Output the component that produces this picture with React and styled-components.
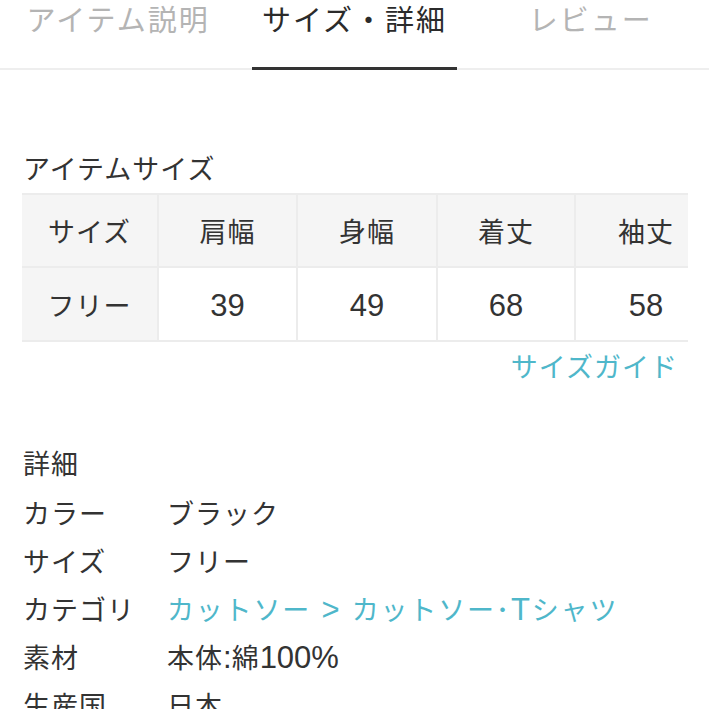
import React from "react";
import styled, { createGlobalStyle } from "styled-components";

const GlobalStyle = createGlobalStyle`
  html, body {
    margin: 0;
    padding: 0;
    background: #fff;
  }
  body {
    font-family: "Noto Sans CJK JP", "Noto Sans", sans-serif;
    color: #333;
  }
`;

const tabs = ["アイテム説明", "サイズ・詳細", "レビュー"];
const columns = [
  { label: "サイズ", value: "フリー", width: 135 },
  { label: "肩幅", value: "39", width: 137 },
  { label: "身幅", value: "49", width: 138 },
  { label: "着丈", value: "68", width: 136 },
  { label: "袖丈", value: "58", width: 140 },
];
const details = [
  { label: "カラー", value: "ブラック" },
  { label: "サイズ", value: "フリー" },
  { label: "カテゴリ", value: "カットソー > カットソー･Tシャツ", link: true },
  { label: "素材", value: "本体:綿100%" },
  { label: "生産国", value: "日本" },
];

// latin runs are set in a bigger Arial-like face, as in the original page
const withLatin = (text) =>
  text.split(/([\x20-\x7e]+)/).map((part, i) =>
    /[\x20-\x7e]/.test(part) ? <Latin key={i}>{part}</Latin> : part
  );

const App = () => {
  return (
    <Page>
      <GlobalStyle />
      <TabBar>
        {tabs.map((t, i) => (
          <Tab key={t} $active={i === 1}>
            {t}
          </Tab>
        ))}
      </TabBar>
      <Content>
        <SectionTitle>アイテムサイズ</SectionTitle>
        <TableWrap>
          <SizeTable>
            <tbody>
              <tr>
                {columns.map((c) => (
                  <HeadCell key={c.label} style={{ width: c.width }}>
                    {c.label}
                  </HeadCell>
                ))}
              </tr>
              <tr>
                {columns.map((c, i) => (
                  <BodyCell key={c.label} $first={i === 0}>
                    {withLatin(c.value)}
                  </BodyCell>
                ))}
              </tr>
            </tbody>
          </SizeTable>
        </TableWrap>
        <GuideRow>
          <GuideLink>サイズガイド</GuideLink>
        </GuideRow>
        <DetailTitle>詳細</DetailTitle>
        <DetailList>
          {details.map((d) => (
            <DetailRow key={d.label}>
              <DetailLabel>{d.label}</DetailLabel>
              <DetailValue $link={d.link}>{withLatin(d.value)}</DetailValue>
            </DetailRow>
          ))}
        </DetailList>
      </Content>
    </Page>
  );
};

const Page = styled.div`
  width: 709px;
  height: 709px;
  overflow: hidden;
  background: #fff;
`;

const TabBar = styled.div`
  display: grid;
  grid-template-columns: repeat(3, 1fr);
  height: 68px;
  border-bottom: 2px solid #eeeeee;
`;

const Tab = styled.div`
  margin: 0 16px -2px;
  padding-top: 2px;
  text-align: center;
  font-size: 29px;
  line-height: 32px;
  letter-spacing: 2px;
  color: ${(p) => (p.$active ? "#2b2b2b" : "#b4b4b4")};
  border-bottom: 3px solid ${(p) => (p.$active ? "#333" : "transparent")};
`;

const Content = styled.div`
  padding: 0 21px 0 22px;
  font-size: 27px;
  letter-spacing: 1px;
`;

const Latin = styled.span`
  font-family: "Liberation Sans", Arial, sans-serif;
  font-size: 31px;
  letter-spacing: 0;
`;

const SectionTitle = styled.div`
  margin-top: 80px;
  line-height: 36px;
  color: #333;
  padding-left: 1px;
`;

const TableWrap = styled.div`
  margin-top: 7px;
  width: 666px;
  overflow: hidden;
`;

const SizeTable = styled.table`
  border-collapse: collapse;
  table-layout: fixed;
  width: 686px;
  border-top: 2px solid #ececec;
  border-bottom: 2px solid #ececec;
  font-size: 27px;
  letter-spacing: 1px;
`;

const HeadCell = styled.td`
  height: 71px;
  padding: 0;
  text-align: center;
  color: #333;
  background: #f5f5f5;
  border-right: 2px solid #ececec;
  border-bottom: 2px solid #ececec;
`;

const BodyCell = styled.td`
  height: 72px;
  padding: 0;
  text-align: center;
  color: #333;
  background: ${(p) => (p.$first ? "#f5f5f5" : "#fff")};
  border-right: 2px solid #ececec;
`;

const GuideRow = styled.div`
  display: flex;
  justify-content: flex-end;
  width: 666px;
  padding-right: 10px;
  box-sizing: border-box;
  margin-top: 4px;
`;

const GuideLink = styled.a`
  line-height: 40px;
  color: #4fb7ca;
  text-decoration: none;
`;

const DetailTitle = styled.div`
  margin-top: 57px;
  line-height: 40px;
  padding-left: 1px;
`;

const DetailList = styled.div`
  display: flex;
  flex-direction: column;
  margin-top: 5px;
`;

const DetailRow = styled.div`
  display: flex;
  height: 48px;
  align-items: center;
  padding-left: 1px;
  white-space: nowrap;
`;

const DetailLabel = styled.div`
  width: 144px;
  flex-shrink: 0;
`;

const DetailValue = styled.div`
  color: ${(p) => (p.$link ? "#4fb7ca" : "#333")};
  letter-spacing: ${(p) => (p.$link ? "1.8px" : "1px")};

  & > span {
    letter-spacing: ${(p) => (p.$link ? "1.8px" : "0")};
  }
`;

export default App;
